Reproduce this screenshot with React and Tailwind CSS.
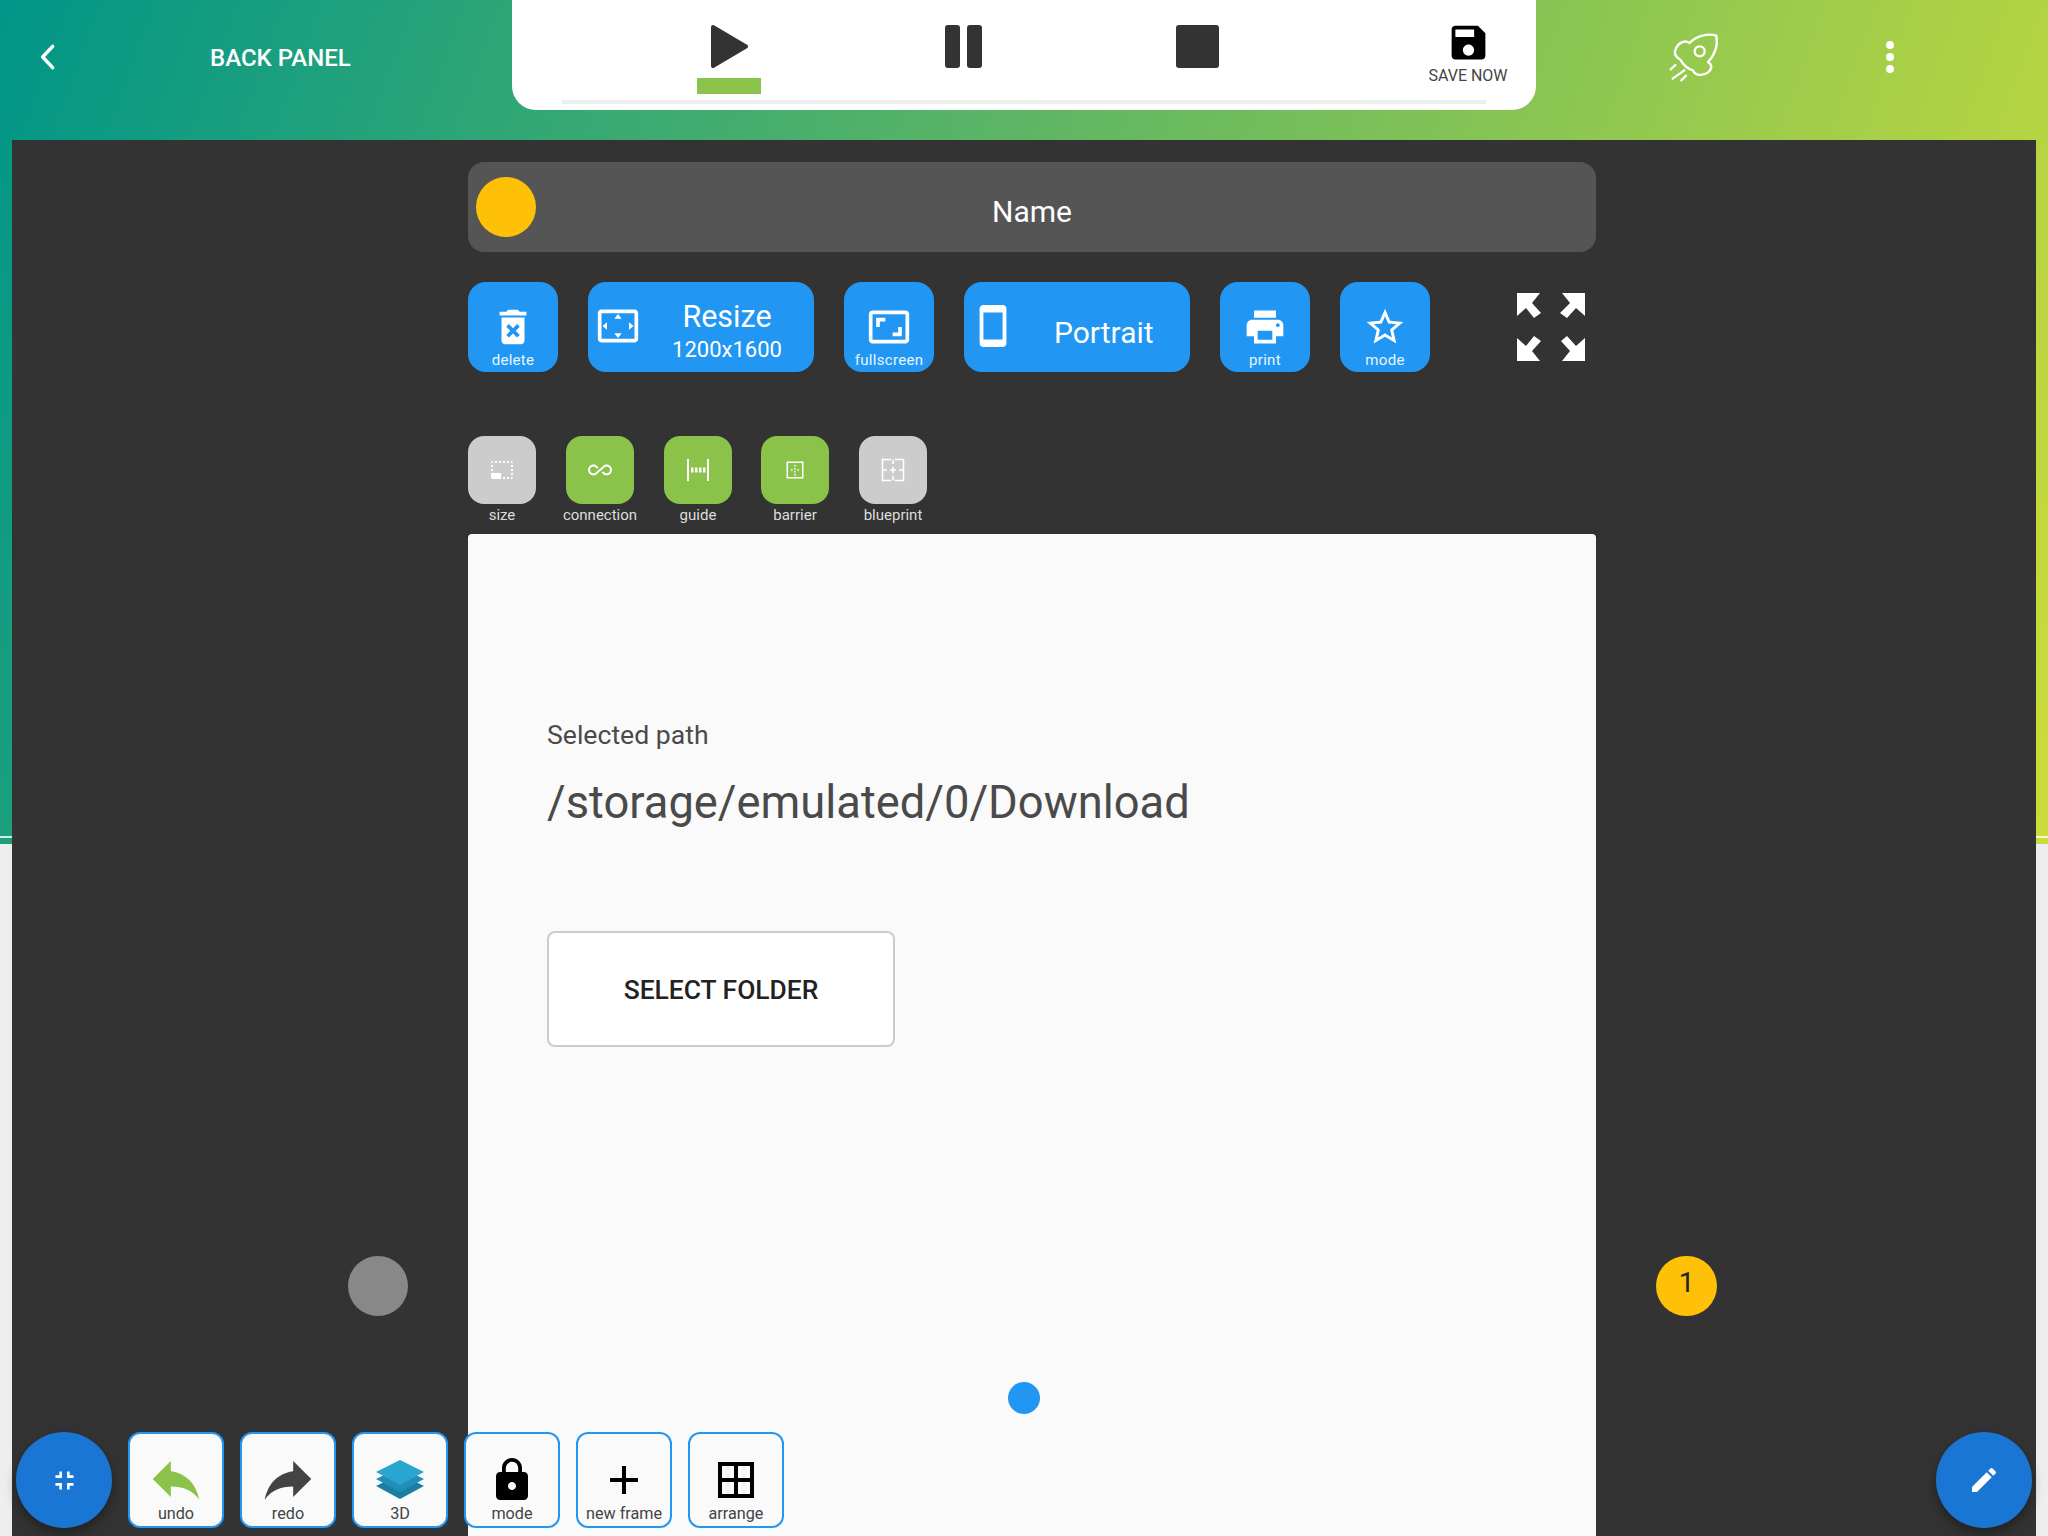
const P = ({ d, s = 24, c = "#fff", className = "" }) => (
  <svg width={s} height={s} viewBox="0 0 24 24" fill={c} className={"shrink-0 " + className}>
    <path d={d} />
  </svg>
);

const paths = {
  del: "M6 19c0 1.1.9 2 2 2h8c1.1 0 2-.9 2-2V7H6v12zm2.46-7.12 1.41-1.41L12 12.59l2.12-2.12 1.41 1.41L13.41 14l2.12 2.12-1.41 1.41L12 15.41l-2.12 2.12-1.41-1.41L10.59 14l-2.13-2.12zM15.5 4l-1-1h-5l-1 1H5v2h14V4z",
  overscan: "M12.01 5.5 10 8h4l-1.99-2.5zM18 10v4l2.5-1.99L18 10zM6 10l-2.5 2.01L6 14v-4zm8 6h-4l2.01 2.5L14 16zm7-13H3c-1.1 0-2 .9-2 2v14c0 1.1.9 2 2 2h18c1.1 0 2-.9 2-2V5c0-1.1-.9-2-2-2zm0 16.01H3V4.99h18v14.02z",
  aspect: "M19 12h-2v3h-3v2h5v-5zM7 9h3V7H5v5h2V9zm14-6H3c-1.1 0-2 .9-2 2v14c0 1.1.9 2 2 2h18c1.1 0 2-.9 2-2V5c0-1.1-.9-2-2-2zm0 16.01H3V4.99h18v14.02z",
  phone: "M17 1.01 7 1c-1.1 0-2 .9-2 2v18c0 1.1.9 2 2 2h10c1.1 0 2-.9 2-2V3c0-1.1-.9-1.99-2-1.99zM17 19H7V5h10v14z",
  print: "M19 8H5c-1.66 0-3 1.34-3 3v6h4v4h12v-4h4v-6c0-1.66-1.34-3-3-3zm-3 11H8v-5h8v5zm3-7c-.55 0-1-.45-1-1s.45-1 1-1 1 .45 1 1-.45 1-1 1zm-1-9H6v4h12V3z",
  star: "M22 9.24l-7.19-.62L12 2 9.19 8.63 2 9.24l5.46 4.73L5.82 21 12 17.27 18.18 21l-1.63-7.03L22 9.24zM12 15.4l-3.76 2.27 1-4.28-3.32-2.88 4.38-.38L12 6.1l1.71 4.04 4.38.38-3.32 2.88 1 4.28L12 15.4z",
  size: "M23 15h-2v2h2v-2zm0-4h-2v2h2v-2zm0 8h-2v2c1 0 2-1 2-2zM15 3h-2v2h2V3zm8 4h-2v2h2V7zm-2-4v2h2c0-1-1-2-2-2zM3 21h8v-6H1v4c0 1.1.9 2 2 2zM3 7H1v2h2V7zm12 12h-2v2h2v-2zm4-16h-2v2h2V3zm0 16h-2v2h2v-2zM3 3C2 3 1 4 1 5h2V3zm0 8H1v2h2v-2zm8-8H9v2h2V3zM7 3H5v2h2V3z",
  infinity: "M18.6 6.62c-1.44 0-2.8.56-3.77 1.53L12 10.66 10.48 12h.01L7.8 14.39c-.64.64-1.49.99-2.4.99-1.87 0-3.39-1.51-3.39-3.38S3.53 8.62 5.4 8.62c.91 0 1.76.35 2.44 1.03l1.13 1 1.51-1.34L9.22 8.2C8.2 7.18 6.84 6.62 5.4 6.62 2.42 6.62 0 9.04 0 12s2.42 5.38 5.4 5.38c1.44 0 2.8-.56 3.77-1.53l2.83-2.5.01.01L13.52 12h-.01l2.69-2.39c.64-.64 1.49-.99 2.4-.99 1.87 0 3.39 1.51 3.39 3.38s-1.52 3.38-3.39 3.38c-.9 0-1.76-.35-2.44-1.03l-1.14-1.01-1.51 1.34 1.27 1.12c1.02 1.01 2.37 1.57 3.82 1.57 2.98 0 5.4-2.41 5.4-5.38s-2.42-5.37-5.4-5.37z",
  undo: "M10 9V5l-7 7 7 7v-4.1c5 0 8.5 1.6 11 5.1-1-5-4-10-11-11z",
  redo: "M14 9V5l7 7-7 7v-4.1c-5 0-8.5 1.6-11 5.1 1-5 4-10 11-11z",
  lock: "M18 8h-1V6c0-2.76-2.24-5-5-5S7 3.24 7 6v2H6c-1.1 0-2 .9-2 2v10c0 1.1.9 2 2 2h12c1.1 0 2-.9 2-2V10c0-1.1-.9-2-2-2zm-6 9c-1.1 0-2-.9-2-2s.9-2 2-2 2 .9 2 2-.9 2-2 2zm3.1-9H8.9V6c0-1.71 1.39-3.1 3.1-3.1 1.71 0 3.1 1.39 3.1 3.1v2z",
  plus: "M19 13h-6v6h-2v-6H5v-2h6V5h2v6h6v2z",
  grid: "M3 3v18h18V3H3zm8 16H5v-6h6v6zm0-8H5V5h6v6zm8 8h-6v-6h6v6zm0-8h-6V5h6v6z",
  exit: "M5 16h3v3h2v-5H5v2zm3-8H5v2h5V5H8v3zm6 11h2v-3h3v-2h-5v5zm2-11V5h-2v5h5V8h-3z",
  edit: "M3 17.25V21h3.75L17.81 9.94l-3.75-3.75L3 17.25zM20.71 7.04c.39-.39.39-1.02 0-1.41l-2.34-2.34c-.39-.39-1.02-.39-1.41 0l-1.83 1.83 3.75 3.75 1.83-1.83z",
  save: "M17 3H5c-1.11 0-2 .9-2 2v14c0 1.1.89 2 2 2h14c1.1 0 2-.9 2-2V7l-4-4zm-5 16c-1.66 0-3-1.34-3-3s1.34-3 3-3 3 1.34 3 3-1.34 3-3 3zm3-10H5V5h10v4z",
};

const Rocket = () => (
  <svg width="52" height="50" viewBox="85 35 156 150" fill="none" stroke="#fff" strokeWidth="7" strokeLinecap="round" strokeLinejoin="round">
    <path d="M230 46C205 38 170 46 150 68C135 58 118 66 110 82C102 96 104 108 122 118C130 132 145 146 160 150C166 166 188 168 205 156C218 146 218 132 205 125C225 105 236 75 230 46Z" />
    <circle cx="180" cy="93" r="15" />
    <path d="M93 147L107 134M99 175L134 150M125 180L139 166" />
  </svg>
);

const Expand = () => (
  <svg width="68" height="68" viewBox="0 0 68 68" fill="#fff">
    <polygon points="0,0 23,0 15,10 24,20 17,25 9,15 0,23" />
    <polygon points="68,0 45,0 53,10 43,20 50,25 59,15 68,23" />
    <polygon points="0,68 23,68 15,58 24,48 17,43 9,53 0,45" />
    <polygon points="68,68 45,68 53,58 44,48 50,43 59,53 68,45" />
  </svg>
);

const Guide = () => (
  <svg width="24" height="24" viewBox="0 0 24 24" fill="#fff">
    <rect x="1" y="1" width="2" height="22" />
    <rect x="21" y="1" width="2" height="22" />
    <rect x="5" y="9.5" width="2.5" height="5" />
    <rect x="9" y="9.5" width="2.5" height="5" />
    <rect x="13" y="9.5" width="2.5" height="5" />
    <rect x="17" y="9.5" width="2.5" height="5" />
  </svg>
);

const Barrier = () => (
  <svg width="24" height="24" viewBox="0 0 24 24" fill="#fff">
    <path fillRule="evenodd" d="M3.5 3.5h17v17h-17zM5 5v14h14V5z" />
    <rect x="11.3" y="7" width="1.4" height="1.6" />
    <rect x="11.3" y="10" width="1.4" height="1.6" />
    <rect x="11.3" y="13" width="1.4" height="1.6" />
    <rect x="11.3" y="16" width="1.4" height="1.6" />
    <rect x="8" y="11.3" width="1.6" height="1.4" />
    <rect x="14.4" y="11.3" width="1.6" height="1.4" />
  </svg>
);

const Blueprint = () => (
  <svg width="24" height="24" viewBox="0 0 24 24" fill="none" stroke="#fff" strokeWidth="1.6">
    <path d="M10 1.5H1.5V22.5H10M14 1.5H22.5V22.5H14M12 1.5V6M12 18V22.5M1.5 12H6M18 12H22.5" />
    <path d="M12 9V15M9 12H15" />
  </svg>
);

const Layers = () => (
  <svg width="48" height="40" viewBox="0 0 48 40">
    <polygon points="24,14 48,26 24,39 0,26" fill="#1d7da1" />
    <polygon points="24,7 48,19 24,32 0,19" fill="#1f8fb9" />
    <polygon points="24,0 48,12 24,25 0,12" fill="#29a5d1" />
  </svg>
);

const BlueBtn = ({ icon, label }) => (
  <div className="flex h-[90px] w-[90px] flex-col items-center rounded-[18px] bg-[#2196f3] pt-[22px]">
    <div className="flex h-[46px] items-center justify-center">{icon}</div>
    <span className="mt-[-1px] text-[15px] leading-[22px] tracking-[0.3px] text-white/90">{label}</span>
  </div>
);

const Tool = ({ icon, label, on, className = "" }) => (
  <div className={"flex w-[68px] flex-col items-center " + className}>
    <div className={"flex h-[68px] w-[68px] items-center justify-center rounded-[16px] " + (on ? "bg-[#8bc34a]" : "bg-[#cccccc]")}>
      {icon}
    </div>
    <span className="mt-[1px] whitespace-nowrap text-[15px] leading-[20px] text-[#dddddd]">{label}</span>
  </div>
);

const BarBtn = ({ icon, label }) => (
  <div className="flex h-[96px] w-[96px] flex-col items-center rounded-[12px] border-[2.5px] border-[#2196f3] bg-[#fafafa] pt-[22px]">
    <div className="flex h-[48px] items-center justify-center">{icon}</div>
    <span className="mt-[-2px] whitespace-nowrap text-[16.2px] leading-[24px] text-[#444444]">{label}</span>
  </div>
);

export default function App() {
  return (
    <div className="relative flex h-[1536px] w-[2048px] flex-col overflow-hidden bg-[#eeeeee] font-['Roboto',sans-serif]">
      <div className="absolute left-0 top-0 h-[844px] w-full bg-[linear-gradient(110deg,#009688,#cddc39)]">
        <div className="absolute left-0 top-[836px] h-[2px] w-full bg-white/80" />
      </div>

      {/* header */}
      <header className="relative flex h-[140px] items-start">
        <div className="flex h-[114px] w-[512px] items-center pl-[32px]">
          <svg width="32" height="32" viewBox="0 0 24 24" fill="none" stroke="#fff" strokeWidth="2.6" strokeLinecap="round" strokeLinejoin="round">
            <path d="M15.5 4L8 12l7.5 8" />
          </svg>
          <span className="ml-[146px] mt-[2px] whitespace-nowrap text-[24px] font-medium text-white">BACK PANEL</span>
        </div>
        <div className="flex h-[110px] w-[1024px] flex-col rounded-b-[24px] bg-white">
          <div className="flex h-[100px] items-start pl-[185px]">
            <div className="flex w-[64px] flex-col items-center pt-[25px]">
              <svg width="37" height="43" viewBox="0 0 37 43" fill="#333333" stroke="#333333" strokeWidth="4" strokeLinejoin="round">
                <polygon points="2,2 35,21.5 2,41" />
              </svg>
              <div className="mt-[10px] h-[16px] w-[64px] bg-[#8bc34a]" />
            </div>
            <div className="ml-[170px] flex w-[64px] justify-center pt-[25px]">
              <div className="flex gap-[7px]">
                <div className="h-[43px] w-[15px] rounded-[3px] bg-[#333333]" />
                <div className="h-[43px] w-[15px] rounded-[3px] bg-[#333333]" />
              </div>
            </div>
            <div className="ml-[170px] flex w-[64px] justify-center pt-[25px]">
              <div className="h-[43px] w-[43px] rounded-[3px] bg-[#333333]" />
            </div>
            <div className="ml-[179px] flex w-[120px] flex-col items-center pt-[20px]">
              <P d={paths.save} s={45} c="#000" />
              <span className="mt-[1px] text-[16px] leading-[20px] text-[#444444]">SAVE NOW</span>
            </div>
          </div>
          <div className="mx-[50px] h-[4px] bg-[#eeeeee]" />
        </div>
        <div className="ml-[132px] mt-[32px] flex items-start">
          <Rocket />
          <div className="ml-[166px] mt-[9px] flex flex-col gap-[4px]">
            <div className="h-[8px] w-[8px] rounded-full bg-white" />
            <div className="h-[8px] w-[8px] rounded-full bg-white" />
            <div className="h-[8px] w-[8px] rounded-full bg-white" />
          </div>
        </div>
      </header>

      {/* main */}
      <main className="relative mx-[12px] flex min-h-0 flex-1 flex-col overflow-hidden bg-[#333333] pl-[456px] pr-[440px] pt-[22px]">
        <div className="relative flex h-[90px] items-center justify-center rounded-[16px] bg-[#555555] pt-[8px] text-[30px] text-white">
          <div className="absolute left-[8px] top-[15px] h-[60px] w-[60px] rounded-full bg-[#ffc107]" />
          Name
        </div>

        <div className="mt-[30px] flex h-[90px] gap-[30px]">
          <BlueBtn icon={<P d={paths.del} s={46} />} label="delete" />
          <div className="flex h-[90px] w-[226px] items-center rounded-[18px] bg-[#2196f3] pl-[8px] text-white">
            <P d={paths.overscan} s={44} className="mt-[-2px]" />
            <div className="ml-[12px] mt-[9px] flex w-[150px] flex-col items-center">
              <span className="text-[30.5px] leading-[36px]">Resize</span>
              <span className="text-[22px] leading-[30px]">1200x1600</span>
            </div>
          </div>
          <BlueBtn icon={<P d={paths.aspect} s={44} />} label="fullscreen" />
          <div className="flex h-[90px] w-[226px] items-center rounded-[18px] bg-[#2196f3] pl-[6px] text-white">
            <P d={paths.phone} s={46} className="mt-[-2px]" />
            <span className="ml-[38px] mt-[10px] text-[30px]">Portrait</span>
          </div>
          <BlueBtn icon={<P d={paths.print} s={44} />} label="print" />
          <BlueBtn icon={<P d={paths.star} s={44} />} label="mode" />
          <div className="ml-[57px] mt-[11px]">
            <Expand />
          </div>
        </div>

        <div className="mt-[64px] flex gap-[30px]">
          <Tool label="size" icon={<P d={paths.size} s={24} />} />
          <Tool on label="connection" icon={<P d={paths.infinity} s={24} />} />
          <Tool on label="guide" icon={<Guide />} />
          <Tool on label="barrier" className="ml-[-1px]" icon={<Barrier />} />
          <Tool label="blueprint" icon={<Blueprint />} />
        </div>

        <section className="mt-[9px] flex-1 rounded-t-[4px] bg-[#fafafa] pl-[79px] pt-[182px]">
          <div className="text-[26.6px] leading-[38px] text-[#4a4a4a]">Selected path</div>
          <div className="mt-[21px] text-[45.3px] leading-[56px] text-[#4a4a4a]">/storage/emulated/0/Download</div>
          <div className="mt-[100px] flex h-[116px] w-[348px] items-center justify-center rounded-[8px] border-2 border-[#cccccc] bg-white pt-[4px] text-[26.4px] font-medium text-[#222222]">
            SELECT FOLDER
          </div>
        </section>
      </main>

      {/* overlays */}
      <div className="absolute left-[348px] top-[1256px] h-[60px] w-[60px] rounded-full bg-[#888888]" />
      <div className="absolute left-[1656px] top-[1256px] flex h-[60px] w-[61px] items-center justify-center rounded-full bg-[#ffc107] pb-[6px] text-[28px] text-[#222222]">1</div>
      <div className="absolute left-[1008px] top-[1382px] h-[32px] w-[32px] rounded-full bg-[#2196f3]" />

      <div className="absolute left-[16px] top-[1432px] flex items-center">
        <div className="flex h-[96px] w-[96px] items-center justify-center rounded-full bg-[#1976d2] shadow-[0_6px_12px_rgba(0,0,0,0.35)]">
          <P d={paths.exit} s={31} />
        </div>
        <div className="ml-[16px] flex gap-[16px]">
          <BarBtn icon={<P d={paths.undo} s={62} c="#8bc34a" className="mt-[-2px]" />} label="undo" />
          <BarBtn icon={<P d={paths.redo} s={62} c="#444444" className="mt-[-2px]" />} label="redo" />
          <BarBtn icon={<Layers />} label="3D" />
          <BarBtn icon={<P d={paths.lock} s={48} c="#000" />} label="mode" />
          <BarBtn icon={<P d={paths.plus} s={48} c="#000" />} label="new frame" />
          <BarBtn icon={<P d={paths.grid} s={48} c="#000" />} label="arrange" />
        </div>
      </div>

      <div className="absolute left-[1936px] top-[1432px] flex h-[96px] w-[96px] items-center justify-center rounded-full bg-[#1976d2] shadow-[0_6px_12px_rgba(0,0,0,0.35)]">
        <P d={paths.edit} s={32} />
      </div>
    </div>
  );
}
